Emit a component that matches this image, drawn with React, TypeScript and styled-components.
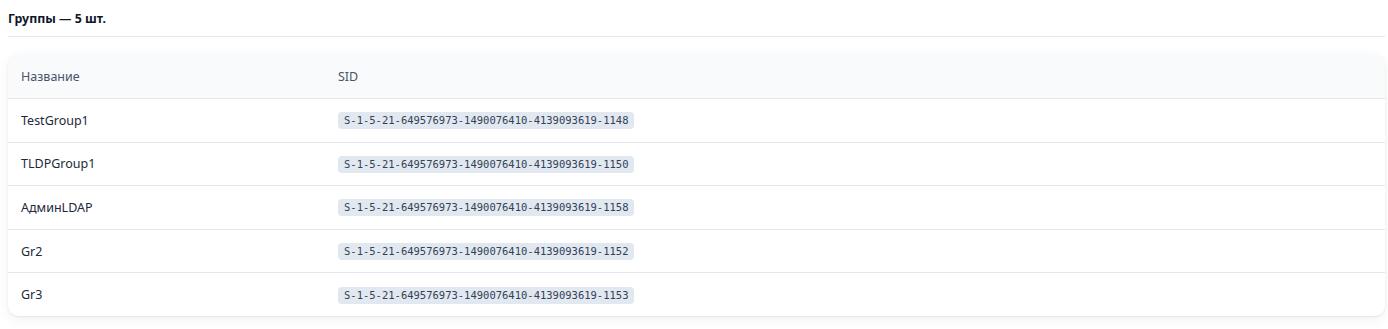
import styled, { createGlobalStyle } from "styled-components";

const GlobalStyle = createGlobalStyle`
  body {
    margin: 0;
    background: #ffffff;
    font-family: "Noto Sans", "Open Sans", sans-serif;
    color: #1e293b;
  }
`;

const Page = styled.div`
  padding: 8px 3px 12px 8px;
`;

const Heading = styled.h2`
  margin: 0;
  padding: 2px 0 9px;
  font-size: 12.4px;
  font-weight: 700;
  line-height: 17px;
  color: #0f172a;
  border-bottom: 1px solid #e2e8f0;
`;

const Card = styled.div`
  margin-top: 17px;
  background: #ffffff;
  border-radius: 10px;
  box-shadow: 0 1px 2px rgba(15, 23, 42, 0.08), 0 4px 14px rgba(15, 23, 42, 0.05);
  overflow: hidden;
`;

const Table = styled.table`
  width: 100%;
  border-collapse: collapse;
  font-size: 12.5px;
`;

const HeadCell = styled.th<{ $w?: string }>`
  height: 44px;
  padding: 0 12px 0 13px;
  text-align: left;
  font-weight: 400;
  color: #475569;
  background: #f8fafc;
  border-bottom: 1px solid #e2e8f0;
  width: ${(p) => p.$w ?? "auto"};
`;

const Row = styled.tr`
  & + & td {
    border-top: 1px solid #e2e8f0;
  }
`;

const Cell = styled.td`
  height: 42.6px;
  padding: 0 12px 0 13px;
  color: #1e293b;
`;

const Sid = styled.code`
  display: inline-block;
  padding: 1px 6px;
  border-radius: 4px;
  background: #e2e8f0;
  color: #334155;
  font-family: "DejaVu Sans Mono", "Liberation Mono", monospace;
  font-size: 10.5px;
  line-height: 15px;
`;

const groups = [
  { name: "TestGroup1", sid: "S-1-5-21-649576973-1490076410-4139093619-1148" },
  { name: "TLDPGroup1", sid: "S-1-5-21-649576973-1490076410-4139093619-1150" },
  { name: "АдминLDAP", sid: "S-1-5-21-649576973-1490076410-4139093619-1158" },
  { name: "Gr2", sid: "S-1-5-21-649576973-1490076410-4139093619-1152" },
  { name: "Gr3", sid: "S-1-5-21-649576973-1490076410-4139093619-1153" },
];

export default function App() {
  return (
    <Page>
      <GlobalStyle />
      <Heading>Группы — {groups.length} шт.</Heading>
      <Card>
        <Table>
          <thead>
            <tr>
              <HeadCell $w="292px">Название</HeadCell>
              <HeadCell>SID</HeadCell>
            </tr>
          </thead>
          <tbody>
            {groups.map((g) => (
              <Row key={g.sid}>
                <Cell>{g.name}</Cell>
                <Cell>
                  <Sid>{g.sid}</Sid>
                </Cell>
              </Row>
            ))}
          </tbody>
        </Table>
      </Card>
    </Page>
  );
}
